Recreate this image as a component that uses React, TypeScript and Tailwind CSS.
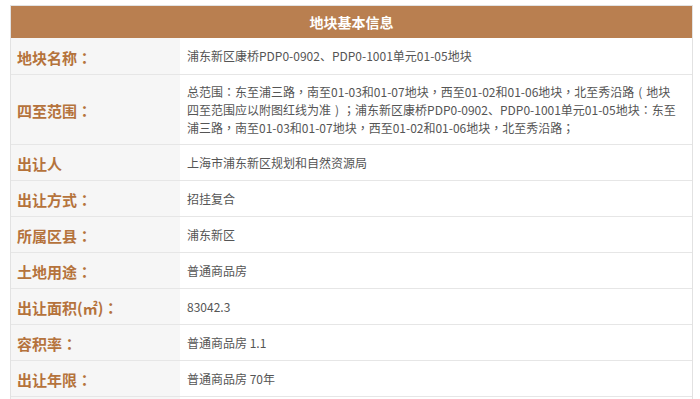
import React from "react";

const PUNCT = "：，；";

function P({ text }: { text: string }) {
  const parts: React.ReactNode[] = [];
  let buf = "";
  let k = 0;
  for (const ch of text) {
    if (PUNCT.includes(ch)) {
      if (buf) parts.push(<span key={k++}>{buf}</span>);
      buf = "";
      parts.push(
        <span key={k++} style={{ fontFamily: '"Noto Sans CJK TC", sans-serif' }}>
          {ch}
        </span>
      );
    } else if (ch === "（" || ch === "）") {
      if (buf) parts.push(<span key={k++}>{buf}</span>);
      buf = "";
      parts.push(
        <span key={k++} className="inline-block w-[12px] text-center">
          {ch === "（" ? "(" : ")"}
        </span>
      );
    } else {
      buf += ch;
    }
  }
  if (buf) parts.push(<span key={k++}>{buf}</span>);
  return <>{parts}</>;
}

const rows: { label: string; value: React.ReactNode; h?: string }[] = [
  { label: "地块名称：", value: <P text="浦东新区康桥PDP0-0902、PDP0-1001单元01-05地块" />, h: "h-[36px]" },
  {
    label: "四至范围：",
    value: (
      <>
        <P text="总范围：东至浦三路，南至01-03和01-07地块，西至01-02和01-06地块，北至秀沿路（地块" />
        <br />
        <P text="四至范围应以附图红线为准）；浦东新区康桥PDP0-0902、PDP0-1001单元01-05地块：东至" />
        <br />
        <P text="浦三路，南至01-03和01-07地块，西至01-02和01-06地块，北至秀沿路；" />
      </>
    ),
  },
  { label: "出让人", value: "上海市浦东新区规划和自然资源局" },
  { label: "出让方式：", value: "招挂复合" },
  { label: "所属区县：", value: "浦东新区" },
  { label: "土地用途：", value: "普通商品房" },
  { label: "出让面积(㎡)：", value: "83042.3" },
  { label: "容积率：", value: "普通商品房 1.1" },
  { label: "出让年限：", value: "普通商品房 70年" },
  { label: "", value: "" },
];

export default function App() {
  return (
    <div
      className="w-[700px] h-[399px] overflow-hidden bg-white pt-[5px] pl-[10px]"
      style={{ fontFamily: '"Microsoft YaHei", "Noto Sans CJK SC", "Noto Sans", sans-serif' }}
    >
      <div className="w-[683px] border border-[#e2e2e2]">
        <div className="h-[32px] bg-[#b97f50] flex items-center justify-center text-white text-[14px] font-bold">
          地块基本信息
        </div>
        {rows.map((r, i) => (
          <div key={i} className="flex border-b border-[#e6e6e6]">
            <div
              className={`w-[169px] shrink-0 bg-[#f6f6f6] flex items-center pl-[6px] pt-[4px] text-[15px] font-bold text-[#b5733c] ${
                r.h ?? ""
              }`}
            >
              <P text={r.label} />
            </div>
            <div
              className={`flex-1 flex items-center pl-[7px] pr-[6px] text-[12px] leading-[18px] text-[#555555] ${
                i === 1 ? "py-[7.5px]" : r.h ?? "h-[35px]"
              }`}
            >
              <div className="whitespace-nowrap">{r.value}</div>
            </div>
          </div>
        ))}
      </div>
    </div>
  );
}
